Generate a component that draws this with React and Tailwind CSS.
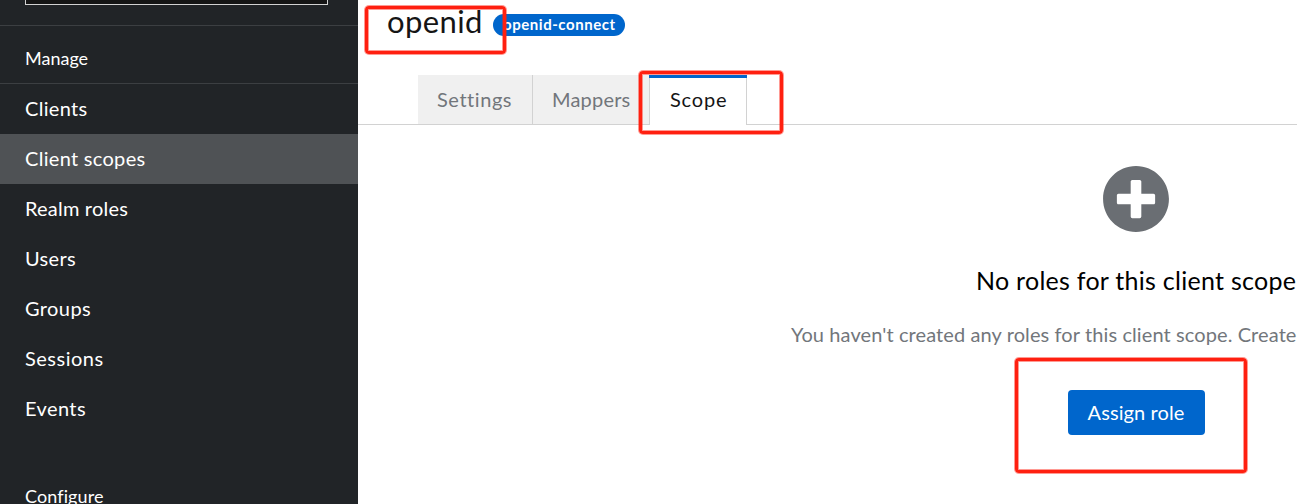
import { FaPlusCircle } from "react-icons/fa";

const navItems = [
  { label: "Clients", spacing: "tracking-[0.3px]" },
  { label: "Client scopes", spacing: "tracking-[0.3px]", active: true },
  { label: "Realm roles", spacing: "tracking-[0.2px]" },
  { label: "Users", spacing: "tracking-[0.35px]" },
  { label: "Groups", spacing: "tracking-[0.4px]" },
  { label: "Sessions", spacing: "tracking-[0.5px]" },
  { label: "Events", spacing: "tracking-[0.4px]" },
];

const outline =
  "absolute rounded-[4px] border-3 border-[#ff2010] shadow-[0_0_0_1px_rgba(255,32,16,0.45),inset_0_0_0_1px_rgba(255,32,16,0.45)]";

function Sidebar() {
  return (
    <aside className="flex w-[358px] shrink-0 flex-col bg-[#212427] text-white">
      <div className="h-[26px] shrink-0 border-b border-[#3c3f42] px-[25px]">
        <div className="h-[5px] w-[303px] border border-t-0 border-[#d2d2d2] bg-[#151515]" />
      </div>
      <h2 className="h-[58px] shrink-0 border-b border-[#3c3f42] pl-[25px] text-[18px] leading-[64px]">
        <span>Manage</span>
      </h2>
      <nav className="flex shrink-0 flex-col">
        {navItems.map((item) => (
          <a
            key={item.label}
            className={`h-[50px] pl-[25px] text-[20px] leading-[48px] ${item.active ? "bg-[#4f5255]" : ""}`}
          >
            <span className={item.spacing}>{item.label}</span>
          </a>
        ))}
      </nav>
      <h2 className="mt-[50px] shrink-0 pl-[25px] text-[18px] leading-[24px] tracking-[0.1px]">
        <span>Configure</span>
      </h2>
    </aside>
  );
}

function Tabs() {
  return (
    <div className="flex h-[50px] shrink-0 text-[20px] leading-[48px] text-[#72767b]">
      <div className="w-[60px] border-b border-[#d2d2d2]" />
      <div className="w-[115px] border-r border-b border-[#d2d2d2] bg-[#f0f0f0] pl-[19px] tracking-[0.55px]">
        <span>Settings</span>
      </div>
      <div className="w-[117px] border-r border-b border-[#d2d2d2] bg-[#f0f0f0] pl-[19px] tracking-[0.2px]">
        <span>Mappers</span>
      </div>
      <div className="-ml-px w-[98px] border-t-3 border-t-[#0066cc] bg-white text-[#151515]">
        <div className="h-[47px] border-x border-[#d2d2d2] pl-[20px] leading-[42px] tracking-[0.8px]">
          <span>Scope</span>
        </div>
      </div>
      <div className="flex-1 border-b border-[#d2d2d2]" />
    </div>
  );
}

function EmptyState() {
  return (
    <div className="flex w-[1556px] flex-col items-center pt-[40px]">
      <FaPlusCircle className="size-[68px] text-[#6a6e73]" />
      <h1 className="mt-[29px] w-[320px] text-[25px] leading-[36px] tracking-[0.27px] whitespace-nowrap text-black">
        <span>No roles for this client scope</span>
      </h1>
      <p className="mt-[21px] w-[690px] text-[20px] leading-[30px] tracking-[0.1px] text-[#72767b]">
        <span>You haven't created any roles for this client scope. Create</span>
      </p>
      <button className="mt-[41px] h-[45px] w-[137px] rounded-[4px] bg-[#0066cc] text-[20px] leading-[45px] tracking-[0.1px] text-white">
        <span>Assign role</span>
      </button>
    </div>
  );
}

export default function App() {
  return (
    <div className="relative flex h-[504px] w-[1297px] overflow-hidden bg-white font-['Lato',sans-serif]">
      <Sidebar />
      <main className="flex min-w-0 flex-1 flex-col overflow-hidden">
        <header className="flex h-[75px] shrink-0 items-start pl-[29px]">
          <h1 className="w-[106px] text-[31px] leading-[42px] tracking-[0.4px] text-[#151515]">
            <span>openid</span>
          </h1>
          <span className="mt-[14px] h-[22px] w-[132px] rounded-full bg-[#0066cc] pl-[10px] text-[15px] leading-[21px] font-bold tracking-[0.55px] text-white">
            <span>openid-connect</span>
          </span>
        </header>
        <Tabs />
        <EmptyState />
      </main>
      <div className={`${outline} top-[6px] left-[365px] h-[48px] w-[141px]`} />
      <div className={`${outline} top-[71px] left-[639px] h-[63px] w-[144px]`} />
      <div className={`${outline} top-[358px] left-[1015px] h-[115px] w-[232px]`} />
    </div>
  );
}
